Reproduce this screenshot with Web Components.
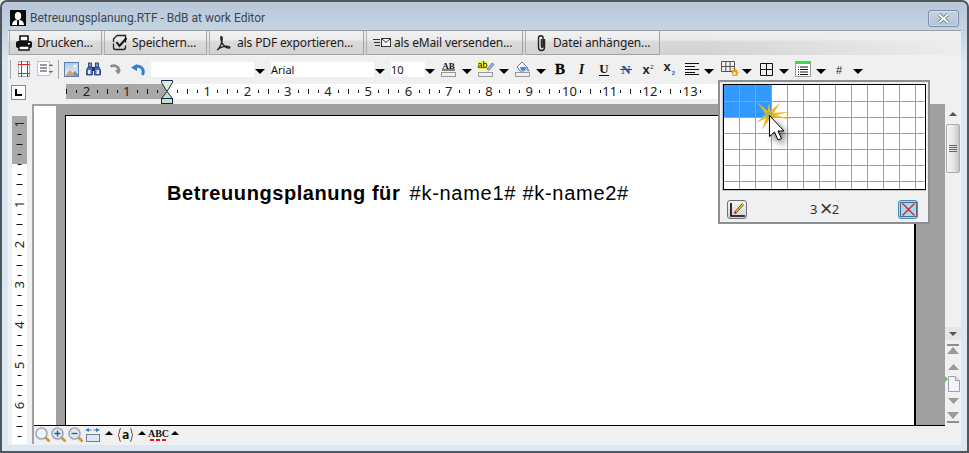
<!DOCTYPE html>
<html lang="de">
<head>
<meta charset="utf-8">
<title>BdB at work Editor</title>
<style>
    html, body { margin: 0; padding: 0; background: #dae8f4; }
</style>
</head>
<body>
<app-window>
    <title-bar slot="title" label="Betreuungsplanung.RTF - BdB at work Editor"></title-bar>
    <action-bar slot="actions">
        <action-button icon="print" style="--w:93px;--pl:5px;--gap:4px">Drucken...</action-button>
        <action-button icon="save" style="--w:103px;--pl:6px;--gap:4px">Speichern...</action-button>
        <action-button icon="pdf" style="--w:155px;--pl:6px;--gap:6px">als PDF exportieren...</action-button>
        <action-button icon="mail" style="--w:157px;--pl:6px;--gap:3px">als eMail versenden...</action-button>
        <action-button icon="clip" style="--w:135px;--pl:10px;--gap:6px">Datei anhängen...</action-button>
    </action-bar>
    <format-toolbar slot="toolbar"></format-toolbar>
    <h-ruler slot="ruler"></h-ruler>
    <v-ruler slot="vruler"></v-ruler>
    <doc-page slot="doc"><b>Betreuungsplanung für</b> #k-name1# #k-name2#</doc-page>
    <scroll-rail slot="scroll"></scroll-rail>
    <status-strip slot="status"></status-strip>
    <table-picker slot="popup"></table-picker>
</app-window>

<script>
const ICONS = {
    print: [18, 16, `<path d="M5 1h8v5H5z" fill="#fff" stroke="#111" stroke-width="1.6"/><rect x="1" y="6" width="16" height="7" rx="2" fill="#111"/><path d="M4 11h10v4H4z" fill="#fff" stroke="#111" stroke-width="1.4"/><rect x="13" y="8" width="2" height="1.5" fill="#fff"/>`],
    save: [17, 17, `<path d="M6 1.500h8.500v7M6 1.500 2.500 5v3M2.500 9.500V13.500q0 2 2 2h8q2 0 2-2v-2" fill="none" stroke="#222" stroke-width="1.300"/><path d="M5.500 8l3 4 7-8" fill="none" stroke="#111" stroke-width="2"/>`],
    pdf: [15, 16, `<path d="M1 15c2-1 4-5 5-9 .4-2 .3-4-.6-4.400-1-.2-.8 3 .6 6 1.500 3 4 5 6.500 5.500 1.500 .2 1.800-1 .6-1.500-2.500-.8-7-.3-12.100 3.400z" fill="none" stroke="#222" stroke-width="1.300"/>`],
    mail: [18, 12, `<path d="M0 2.500h7M1 5.500h6M2 8.500h5" stroke="#333" stroke-width="1"/><rect x="8.500" y="1.500" width="9" height="8" fill="#f4f4f4" stroke="#333"/><path d="M8.500 1.500l4.500 4 4.500-4" fill="none" stroke="#333"/>`],
    clip: [11, 18, `<path d="M8.500 5v8.500a3 3 0 0 1-6 0V4a2.300 2.300 0 0 1 4.600 0v8.500a.8 .8 0 0 1-1.600 0V5" fill="none" stroke="#222" stroke-width="1.400"/>`],
    margins: [12, 16, `<rect x=".5" y=".5" width="11" height="15" fill="#fff" stroke="#aab"/><path d="M3.500 0v16M9.500 0v16M0 3.500h12M0 12.500h12" stroke="#e02020" fill="none"/>`],
    layout: [17, 16, `<rect x=".5" y=".5" width="12" height="14" fill="#fff" stroke="#eda040" stroke-dasharray="2 1"/><path d="M3 4h7M3 7h7M3 10h7" stroke="#778" stroke-width="1.400"/><path d="M14 3l2.500 2h-5zM14 12l2.500-2h-5z" fill="#3c74b8"/>`],
    picture: [15, 15, `<defs><linearGradient id="sky" x1="0" y1="0" x2="0" y2="1"><stop offset="0" stop-color="#a8c8e8"/><stop offset="1" stop-color="#f0f4fa"/></linearGradient></defs><rect x=".5" y=".5" width="14" height="14" fill="url(#sky)" stroke="#5a7fa8"/><path d="M1 14l5-6 3 3 2-2 3 5z" fill="#d8a070"/><path d="M9 11l2-2 3 3v2h-4z" fill="#7a92b0"/><circle cx="11" cy="4" r="1.600" fill="#fff"/>`],
    binoculars: [15, 14, `<rect x="2.500" y="1" width="3" height="5" fill="#7d97d8" stroke="#1a2f70" stroke-width=".8"/><rect x="9.500" y="1" width="3" height="5" fill="#7d97d8" stroke="#1a2f70" stroke-width=".8"/><path d="M2 5h4.500v8H.5V8zM13 5H8.500v8h6V8z" fill="#4d6dbc" stroke="#1a2f70" stroke-width=".8"/><rect x="6.500" y="5" width="2" height="4" fill="#1a2f70"/><rect x="2" y="8" width="2.500" height="4" fill="#e4eeff"/><rect x="10.500" y="8" width="2.500" height="4" fill="#e4eeff"/>`],
    redo: [12, 12, `<path d="M9 10C11.500 5 7 1 1.500 3.500" fill="none" stroke="#868e90" stroke-width="2.800"/><path d="M6 7h6l-3 4.500z" fill="#868e90"/>`],
    undo: [14, 13, `<path d="M11.500 12C14 6 9 1.500 4 4" fill="none" stroke="#2f80d0" stroke-width="3"/><path d="M0 4.500 6 1v7z" fill="#2f80d0"/>`],
    fontcolor: [15, 16, `<text x="7.500" y="7.500" text-anchor="middle" font-family="Liberation Serif" font-weight="bold" font-size="9" fill="#111">AB</text><path d="M1 9h13" stroke="#111"/><rect x=".5" y="11.500" width="14" height="4" fill="#f0f0f0" stroke="#999"/>`],
    highlight: [16, 16, `<rect x="0" y="0" width="9" height="8" fill="#f3f03a"/><text x="4.500" y="7" text-anchor="middle" font-family="Liberation Sans" font-size="9" fill="#111">ab</text><path d="M9 8l5-6 2 1.500-5 6z" fill="#9db6d8" stroke="#4a6a98" stroke-width=".7"/><rect x=".5" y="11.500" width="14" height="4" fill="#f0f0f0" stroke="#999"/>`],
    bucket: [15, 16, `<path d="M2 6l5-5 6 6-4 3H5z" fill="#fff" stroke="#5a7fb8"/><path d="M5 6h7l-3 3.500H6z" fill="#4a88d8"/><path d="M12.500 7l2 3-2 .5z" fill="#3c70b8"/><rect x=".5" y="11.500" width="14" height="4" fill="#f0f0f0" stroke="#999"/>`],
    bold: [10, 12, `<text x="5" y="11" text-anchor="middle" font-family="Liberation Serif" font-weight="bold" font-size="15" fill="#000" stroke="#000" stroke-width=".3">B</text>`],
    italic: [9, 12, `<text x="4.500" y="11" text-anchor="middle" font-family="Liberation Serif" font-style="italic" font-weight="bold" font-size="14" fill="#111">I</text>`],
    underline: [10, 13, `<text x="5" y="10" text-anchor="middle" font-family="Liberation Serif" font-weight="bold" font-size="13" fill="#111">U</text><path d="M0 12.500h10" stroke="#111" stroke-width="1.200"/>`],
    strike: [12, 11, `<text x="6" y="10" text-anchor="middle" font-family="Liberation Serif" font-weight="bold" font-size="13" fill="#1c4ea0">N</text><path d="M0 5.500h12" stroke="#1c4ea0"/>`],
    sup: [12, 12, `<text x="4" y="11" text-anchor="middle" font-family="Liberation Sans" font-weight="bold" font-size="13" fill="#222">x</text><text x="10" y="6" text-anchor="middle" font-family="Liberation Sans" font-size="6" fill="#333">2</text>`],
    sub: [13, 13, `<text x="4" y="8" text-anchor="middle" font-family="Liberation Sans" font-weight="bold" font-size="13" fill="#222">x</text><text x="10.500" y="12" text-anchor="middle" font-family="Liberation Sans" font-size="6" font-weight="bold" fill="#2a60a8">2</text>`],
    align: [14, 12, `<path d="M0 .5h14M0 3.500h10M0 6.500h14M0 9.500h10M0 11.500h14" stroke="#111" fill="none"/>`],
    tableadd: [18, 16, `<path d="M.5 .5h13v10H.5zM4.800 .5v10M9.100 .5v10M.5 5.500h13" fill="none" stroke="#555"/><path d="M12.500 7l1 1.500 1.500-1 .3 1.800 1.900-.3-.8 1.800 1.500 1-1.500 1v2.200h-5v-2.200l-1.500-1 1.500-1-.8-1.800 1.900.3z" fill="#f29a20"/><rect x="12.500" y="11" width="2" height="3" fill="#fff2a0"/>`],
    table: [13, 13, `<path d="M.5 .5h12v12H.5zM6.500 .5v12M.5 6.500h12" fill="none" stroke="#111"/>`],
    list: [16, 16, `<rect x=".5" y=".5" width="15" height="15" fill="#fff" stroke="#999"/><rect x="1" y="1" width="14" height="2" fill="#36e040"/><path d="M5 6h8M5 8.500h8M5 11h8M5 13.500h8M3 6h1M3 8.500h1M3 11h1M3 13.500h1" stroke="#111"/>`],
    hash: [8, 11, `<text x="4" y="10" text-anchor="middle" font-family="Liberation Sans" font-size="11" fill="#222">#</text>`],
    zoom: [16, 16, `<circle cx="6.500" cy="6.500" r="5.500" fill="#eef5fb" stroke="#a0aab4" stroke-width="1.600"/><path d="M10.500 10.500l4 4" stroke="#c89a40" stroke-width="2.600"/>`],
    zoomin: [15, 16, `<circle cx="6.500" cy="6.500" r="5.500" fill="#dfeaf5" stroke="#a0aab4" stroke-width="1.600"/><path d="M10.500 10.500l4 4" stroke="#c89a40" stroke-width="2.600"/><path d="M6.500 3.500v6M3.500 6.500h6" stroke="#2f5f90" stroke-width="1.400"/>`],
    zoomout: [16, 16, `<circle cx="6.500" cy="6.500" r="5.500" fill="#dfeaf5" stroke="#a0aab4" stroke-width="1.600"/><path d="M10.500 10.500l4 4" stroke="#c89a40" stroke-width="2.600"/><path d="M3.500 6.500h6" stroke="#2f5f90" stroke-width="1.400"/>`],
    fit: [16, 14, `<path d="M0 2l4-2v1.500h2.500v1H4V4zM15 2l-4-2v1.500H8.500v1H11V4z" fill="#3a78c8"/><rect x="1.500" y="6.500" width="13" height="7" fill="#dbe8f6" stroke="#6f7f90"/>`],
    vars: [17, 14, `<path d="M4 .5C2 .5 3 5.500 1 7c2 1.500 1 6.500 3 6.500M13 .5c2 0 1 5 3 6.500-2 1.500-1 6.500-3 6.500" fill="none" stroke="#8a2020"/><text x="8.500" y="11" text-anchor="middle" font-family="DejaVu Sans Mono" font-weight="bold" font-size="12" fill="#111">a</text>`],
    spell: [17, 14, `<text x="8.500" y="9" text-anchor="middle" font-family="Liberation Serif" font-weight="bold" font-size="10" fill="#111">ABC</text><path d="M0 12h16" stroke="#f01010" stroke-width="2" stroke-dasharray="4 2"/>`]
};

function iconSvg(name) {
    const [w, h, body] = ICONS[name];
    return `<svg xmlns="http://www.w3.org/2000/svg" width="${w}" height="${h}" viewBox="0 0 ${w} ${h}" style="display:block;overflow:visible">${body}</svg>`;
}

class AppWindow extends HTMLElement {
    connectedCallback() {
        this.attachShadow({ mode: 'open' });
        this.shadowRoot.innerHTML = `
            <style>
                :host {
                    display: block;
                    position: relative;
                    width: 969px;
                    height: 453px;
                    box-sizing: border-box;
                    overflow: hidden;
                    border: 2px solid #50565c;
                    border-radius: 7px 7px 0 0;
                    background: linear-gradient(#b7c7d8 0, #c6d5e3 30px, #d9e7f3 60px, #dae8f4 100%);
                    font-family: "Noto Sans", sans-serif;
                }
                .frame {
                    display: flex;
                    flex-direction: column;
                    height: 100%;
                    padding: 6px;
                    box-sizing: border-box;
                }
                .client {
                    flex: 1;
                    display: flex;
                    flex-direction: column;
                    min-height: 0;
                }
                .main {
                    flex: 1;
                    display: flex;
                    min-height: 0;
                    background: #f0f0f0;
                }
                .left {
                    width: 24px;
                    flex: none;
                    padding: 12px 5px 1px 4px;
                    box-sizing: border-box;
                    display: flex;
                }
                .bar {
                    width: 2px;
                    flex: none;
                    background: #a0a0a0;
                    margin-bottom: 1px;
                }
                .center {
                    flex: 1;
                    min-width: 0;
                    display: flex;
                    flex-direction: column;
                }
                .docrow {
                    flex: 1;
                    min-height: 0;
                    display: flex;
                }
                .docarea {
                    flex: 1;
                    min-width: 0;
                    display: flex;
                    background: #a0a0a0;
                    padding-top: 2px;
                }
                .strip {
                    width: 22px;
                    background: #fff;
                    flex: none;
                }
                .sheet {
                    flex: 1;
                    min-width: 0;
                    padding: 9px 29px 0 9px;
                    display: flex;
                }
            </style>
            <div class="frame">
                <slot name="title"></slot>
                <div class="client">
                    <slot name="actions"></slot>
                    <slot name="toolbar"></slot>
                    <slot name="ruler"></slot>
                    <div class="main">
                        <div class="left"><slot name="vruler"></slot></div>
                        <div class="bar"></div>
                        <div class="center">
                            <div class="docrow">
                                <div class="docarea">
                                    <div class="strip"></div>
                                    <div class="sheet"><slot name="doc"></slot></div>
                                </div>
                                <slot name="scroll"></slot>
                            </div>
                            <slot name="status"></slot>
                        </div>
                    </div>
                </div>
            </div>
            <slot name="popup"></slot>
        `;
    }
}

class TitleBar extends HTMLElement {
    connectedCallback() {
        this.attachShadow({ mode: 'open' });
        this.shadowRoot.innerHTML = `
            <style>
                :host {
                    display: flex;
                    align-items: center;
                    height: 22px;
                    padding: 0 2px 2px 2px;
                    box-sizing: border-box;
                }
                .logo { margin-right: 4px; flex: none; }
                .label {
                    flex: 1;
                    font: 12px Roboto, sans-serif;
                    color: #3c4650;
                    white-space: nowrap;
                }
                .close {
                    width: 29px;
                    height: 15px;
                    border: 1px solid #7b8da3;
                    border-radius: 3px;
                    background: linear-gradient(#c4d2e0, #b2c3d4);
                    box-shadow: inset 0 0 0 1px rgba(255,255,255,.35);
                    display: flex;
                    align-items: center;
                    justify-content: center;
                }
            </style>
            <svg class="logo" width="16" height="16" viewBox="0 0 16 16">
                <rect width="16" height="16" fill="#0a0a0a"/>
                <ellipse cx="8" cy="6" rx="3.200" ry="4" fill="#fff"/>
                <path d="M2 15c0-3 2-4.500 4-5l2 1 2-1c2 .5 4 2 4 5z" fill="#fff"/>
                <path d="M7 11h2v4H7z" fill="#0a0a0a"/>
            </svg>
            <span class="label">${this.getAttribute('label')}</span>
            <span class="close">
                <svg width="13" height="11" viewBox="0 0 13 11">
                    <path d="M2 1.500l9 8M11 1.500l-9 8" stroke="#5f6e7c" stroke-width="3.600"/>
                    <path d="M2 1.500l9 8M11 1.500l-9 8" stroke="#f6f8fa" stroke-width="2"/>
                </svg>
            </span>
        `;
    }
}

class ActionBar extends HTMLElement {
    connectedCallback() {
        this.attachShadow({ mode: 'open' });
        this.shadowRoot.innerHTML = `
            <style>
                :host {
                    display: flex;
                    gap: 2px;
                    height: 25px;
                    padding-left: 1px;
                    box-sizing: border-box;
                    background:
                        linear-gradient(90deg, rgba(240,240,240,0) 700px, rgba(240,240,240,.9) 100%),
                        linear-gradient(#eeeeee 0, #eaeaea 9px, #d8d8d8 10px, #d2d2d2 100%);
                    border-top: 1px solid #9a9ea2;
                    box-shadow: inset -1px 0 0 #e8eef4;
                }
            </style>
            <slot></slot>
        `;
    }
}

class ActionButton extends HTMLElement {
    connectedCallback() {
        this.attachShadow({ mode: 'open' });
        this.shadowRoot.innerHTML = `
            <style>
                :host {
                    display: flex;
                    align-items: center;
                    flex: none;
                    box-sizing: border-box;
                    width: var(--w);
                    padding-left: var(--pl);
                    gap: var(--gap);
                    height: 24px;
                    border: 1px solid #a4a4a4;
                    border-top: 0;
                    border-left-color: #b0b0b0;
                    background: linear-gradient(#f2f2f2 0, #ebebeb 9px, #dcdcdc 10px, #d2d2d2 100%);
                    font: 12px "Noto Sans", sans-serif;
                    color: #1b1b1b;
                    white-space: nowrap;
                    letter-spacing: -.14px;
                }
            </style>
            ${iconSvg(this.getAttribute('icon'))}
            <slot></slot>
        `;
    }
}

class FormatToolbar extends HTMLElement {
    connectedCallback() {
        this.attachShadow({ mode: 'open' });
        // name, gap to the item before it
        const items = [
            ['sep', 2], ['margins', 7], ['layout', 7], ['sep', 4], ['picture', 5], ['binoculars', 7], ['redo', 8], ['undo', 10],
            ['box:', 6, 103], ['arrow', 1], ['box:Arial', 6, 103], ['arrow', 1], ['box:10', 6, 34], ['arrow', 0],
            ['fontcolor', 6], ['arrow', 6], ['highlight', 6], ['arrow', 5], ['bucket', 6], ['arrow', 6],
            ['bold', 9], ['italic', 12], ['underline', 13], ['strike', 11], ['sup', 10], ['sub', 9], ['align', 9], ['arrow', 5],
            ['tableadd', 7], ['arrow', 3], ['table', 8], ['arrow', 6], ['list', 6], ['arrow', 5], ['hash', 9], ['arrow', 10]
        ];
        const html = items.map(([name, gap, width]) => {
            const ml = `margin-left:${gap}px`;
            if (name === 'sep') return `<i class="sep" style="${ml}"></i>`;
            if (name === 'arrow') return `<i class="arrow" style="${ml}"></i>`;
            if (name.startsWith('box:')) return `<span class="box" style="${ml};width:${width}px">${name.slice(4)}</span>`;
            return `<span class="ico" style="${ml}">${iconSvg(name)}</span>`;
        }).join('');
        this.shadowRoot.innerHTML = `
            <style>
                :host {
                    display: flex;
                    align-items: center;
                    height: 29px;
                    background: #f0f0f0;
                    box-sizing: border-box;
                    padding-bottom: 1px;
                }
                .sep { width: 1px; height: 19px; background: #a8a8a8; flex: none; }
                .ico { flex: none; display: block; }
                .arrow {
                    flex: none;
                    width: 0;
                    height: 0;
                    border-left: 5px solid transparent;
                    border-right: 5px solid transparent;
                    border-top: 5px solid #000;
                    margin-top: 4px;
                }
                .box {
                    flex: none;
                    height: 15px;
                    box-sizing: border-box;
                    background: #fff;
                    font: 11px/15px "Noto Sans", sans-serif;
                    color: #111;
                }
            </style>
            ${html}
        `;
    }
}

class HRuler extends HTMLElement {
    connectedCallback() {
        this.attachShadow({ mode: 'open' });
        let marks = '';
        const zero = 101;
        const unit = 40.25;
        for (let q = -10; q <= 53; q++) {
            const x = zero + q * unit / 4;
            if (q === 0) continue;
            if (q % 4 === 0) {
                marks += `<text x="${x}" y="12" text-anchor="middle">${Math.abs(q / 4)}</text>`;
            } else {
                const h = Math.abs(q % 4) === 2 ? 5 : 3;
                marks += `<rect x="${Math.round(x)}" y="${7.500 - h / 2}" width="1" height="${h}" fill="#111"/>`;
            }
        }
        this.shadowRoot.innerHTML = `
            <style>
                :host {
                    display: flex;
                    position: relative;
                    height: 20px;
                    background: #f0f0f0;
                    box-sizing: border-box;
                }
                .corner {
                    width: 15px;
                    height: 15px;
                    margin: 1px 0 0 3px;
                    box-sizing: border-box;
                    border: 1px solid #8a8a8a;
                    background: #fff;
                    flex: none;
                    display: flex;
                    align-items: center;
                    justify-content: center;
                }
                .corner i {
                    width: 7px;
                    height: 7px;
                    border-left: 2px solid #000;
                    border-bottom: 2px solid #000;
                    box-sizing: border-box;
                    display: block;
                }
                svg.scale {
                    display: block;
                    margin-left: 40px;
                    flex: none;
                    overflow: visible;
                    font: 13px "Noto Sans", sans-serif;
                    fill: #222;
                }
                svg.glass {
                    position: absolute;
                    left: 153px;
                    top: -4px;
                }
            </style>
            <div class="corner"><i></i></div>
            <svg class="scale" width="848" height="15" viewBox="0 0 848 15">
                <rect width="848" height="15" fill="#fff"/>
                <rect width="100" height="15" fill="#a8a8a8"/>
                ${marks}
            </svg>
            <svg class="glass" width="12" height="24" viewBox="0 0 12 24">
                <path d="M.5 .5h11v2L6 11.500 .5 2.500z" fill="#dcecdc" stroke="#16264a"/>
                <path d="M6 11.500l5.500 7H.5z" fill="#c5e0c5" stroke="#16264a"/>
                <rect x=".5" y="18.500" width="11" height="5" fill="#c5e0c5" stroke="#16264a"/>
            </svg>
        `;
    }
}

class VRuler extends HTMLElement {
    connectedCallback() {
        this.attachShadow({ mode: 'open' });
        let marks = '';
        const zero = 48;
        const unit = 40.25;
        for (let q = -4; q <= 27; q++) {
            const y = zero + q * unit / 4;
            if (q % 4 === 0 && q !== 0) {
                marks += `<text x="0" y="0" transform="translate(12 ${y}) rotate(-90)" text-anchor="middle">${Math.abs(q / 4)}</text>`;
            } else {
                const w = Math.abs(q % 4) === 2 ? 6 : 4;
                marks += `<rect x="${7.500 - w / 2}" y="${Math.round(y)}" width="${w}" height="1" fill="#111"/>`;
            }
        }
        this.shadowRoot.innerHTML = `
            <style>
                :host { display: block; width: 15px; height: 100%; }
                svg { display: block; overflow: visible; font: 13px "Noto Sans", sans-serif; fill: #222; }
            </style>
            <svg width="15" height="328" viewBox="0 0 15 328">
                <rect width="15" height="328" fill="#fff"/>
                <rect width="15" height="48" fill="#a8a8a8"/>
                ${marks}
            </svg>
        `;
    }
}

class DocPage extends HTMLElement {
    connectedCallback() {
        this.attachShadow({ mode: 'open' });
        this.shadowRoot.innerHTML = `
            <style>
                :host {
                    display: block;
                    flex: 1;
                    box-sizing: border-box;
                    background: #fff;
                    border-top: 1px solid #000;
                    border-left: 1px solid #000;
                    border-right: 2px solid #000;
                    padding: 65px 0 0 101px;
                    font: 20px/24px "Liberation Sans", Arial, sans-serif;
                    letter-spacing: .72px;
                    color: #000;
                    white-space: nowrap;
                }
                ::slotted(b) {
                    letter-spacing: .58px;
                    margin-right: 3px;
                }
            </style>
            <slot></slot>
        `;
    }
}

class ScrollRail extends HTMLElement {
    connectedCallback() {
        this.attachShadow({ mode: 'open' });
        const tri = (w, h, up, fill) => `<svg width="${w}" height="${h}" viewBox="0 0 ${w} ${h}" style="display:block"><path d="${up ? `M0 ${h}L${w / 2} 0L${w} ${h}z` : `M0 0H${w}L${w / 2} ${h}z`}" fill="${fill}"/></svg>`;
        const edge = (up) => `<svg width="12" height="11" viewBox="0 0 12 11" style="display:block">${up
            ? '<rect width="12" height="2" fill="#8e8e8e"/><path d="M0 10l6-7 6 7z" fill="#9a9a9a"/>'
            : '<path d="M0 0h12l-6 7z" fill="#9a9a9a"/><rect y="9" width="12" height="2" fill="#8e8e8e"/>'}</svg>`;
        this.shadowRoot.innerHTML = `
            <style>
                :host {
                    display: flex;
                    flex-direction: column;
                    align-items: center;
                    position: relative;
                    width: 16px;
                    flex: none;
                    background: #f0f0f0;
                }
                .end {
                    width: 100%;
                    height: 20px;
                    flex: none;
                    display: flex;
                    align-items: center;
                    justify-content: center;
                }
                .thumb {
                    width: 14px;
                    height: 49px;
                    flex: none;
                    box-sizing: border-box;
                    border: 1px solid #a8aeb4;
                    border-radius: 2px;
                    background: linear-gradient(90deg, #f4f4f4, #e4e4e4 55%, #c4c4c4);
                    display: flex;
                    flex-direction: column;
                    align-items: center;
                    justify-content: center;
                    gap: 1px;
                }
                .thumb i { width: 8px; height: 1px; background: #666; display: block; }
                .track { flex: 1; }
                .down { height: 13px; background: #e6e6e6; }
                .nav { display: flex; justify-content: center; flex: none; }
                .marker {
                    position: absolute;
                    left: 0;
                    top: 272px;
                    width: 0;
                    height: 0;
                    border-left: 3px solid #20f020;
                    border-top: 3.500px solid transparent;
                    border-bottom: 3.500px solid transparent;
                }
            </style>
            <div class="end">${tri(8, 4, true, '#555')}</div>
            <div class="thumb"><i></i><i></i><i></i><i></i></div>
            <div class="track"></div>
            <div class="end down">${tri(8, 4, false, '#555')}</div>
            <div class="nav" style="margin-top:4px">${edge(true)}</div>
            <div class="nav" style="margin-top:9px">${tri(11, 6, true, '#9a9a9a')}</div>
            <div class="nav" style="margin-top:6px">
                <svg width="13" height="16" viewBox="0 0 13 16" style="display:block">
                    <path d="M1.500 .5h7l4 4v11h-11z" fill="#f4f5fa" stroke="#9a9fb8"/>
                    <path d="M8.500 .5v4h4" fill="#dfe2ee" stroke="#9a9fb8"/>
                </svg>
            </div>
            <div class="nav" style="margin-top:6px">${tri(11, 6, false, '#9a9a9a')}</div>
            <div class="nav" style="margin:8px 0 2px">${edge(false)}</div>
            <i class="marker"></i>
        `;
    }
}

class StatusStrip extends HTMLElement {
    connectedCallback() {
        this.attachShadow({ mode: 'open' });
        const up = '<i class="up"></i>';
        this.shadowRoot.innerHTML = `
            <style>
                :host {
                    display: flex;
                    align-items: center;
                    height: 20px;
                    flex: none;
                    box-sizing: border-box;
                    background: #f0f0f0;
                    position: relative;
                    padding-left: 1px;
                }
                :host::before {
                    content: "";
                    position: absolute;
                    left: 0;
                    right: 16px;
                    top: 0;
                    height: 1px;
                    background: #000;
                }
                svg { flex: none; }
                .up {
                    width: 0;
                    height: 0;
                    border-left: 4px solid transparent;
                    border-right: 4px solid transparent;
                    border-bottom: 4px solid #000;
                    flex: none;
                    margin: 0 4px 4px 4px;
                }
            </style>
            ${iconSvg('zoom')}
            ${iconSvg('zoomin')}
            <span style="width:2px"></span>
            ${iconSvg('zoomout')}
            <span style="width:1px"></span>
            ${iconSvg('fit')}
            ${up}
            ${iconSvg('vars')}
            ${up}
            ${iconSvg('spell')}
            ${up}
        `;
    }
}

class TablePicker extends HTMLElement {
    connectedCallback() {
        this.attachShadow({ mode: 'open' });
        let cells = '';
        for (let r = 0; r < 7; r++) {
            for (let c = 0; c < 13; c++) {
                cells += `<i class="${r < 2 && c < 3 ? 'on' : ''}"></i>`;
            }
        }
        this.shadowRoot.innerHTML = `
            <style>
                :host {
                    display: block;
                    position: absolute;
                    left: 716px;
                    top: 78px;
                    width: 212px;
                    height: 144px;
                    box-sizing: border-box;
                    background: #f0f0f0;
                    border: 2px solid #8c9094;
                    padding: 2px 2px 0 2px;
                }
                .frame {
                    border: 1px solid #c4c4c4;
                    border-top: 0;
                }
                .grid {
                    display: grid;
                    grid-template-columns: repeat(12, 15px) 9px;
                    grid-template-rows: 16px repeat(5, 15px) 7px;
                    gap: 1px;
                    background: #a0a0a0;
                    border: 1px solid #000;
                    width: max-content;
                }
                .grid i { background: #fff; display: block; }
                .grid i.on { background: #3399ff; }
                .foot {
                    display: flex;
                    align-items: center;
                    justify-content: space-between;
                    padding: 8px 8px 0 5px;
                }
                .btn {
                    width: 20px;
                    height: 19px;
                    box-sizing: border-box;
                    border-radius: 3px;
                    display: flex;
                    align-items: center;
                    justify-content: center;
                }
                .draw { border: 1px solid #707070; background: linear-gradient(#f4f4f4, #d4d4d4); }
                .cancel { border: 1px solid #3f8ecb; background: #9edbf5; }
                .size {
                    font: 13px/19px "Noto Sans", sans-serif;
                    color: #333;
                    white-space: nowrap;
                    margin-left: 4px;
                }
                .size span {
                    font: 22px/19px "Liberation Sans", sans-serif;
                    vertical-align: -2px;
                    margin: 0 -1px 0 -1px;
                }
                .fx {
                    position: absolute;
                    left: 28px;
                    top: 9px;
                    pointer-events: none;
                }
            </style>
            <div class="frame"><div class="grid">${cells}</div></div>
            <div class="foot">
                <span class="btn draw">
                    <svg width="17" height="15" viewBox="0 0 17 15">
                        <path d="M2 1v13h14" fill="none" stroke="#000" stroke-width="1.600"/>
                        <path d="M6 11l8-9" stroke="#222" stroke-width="2.400"/>
                        <path d="M6 11l8-9" stroke="#f0d020" stroke-width="1.200"/>
                        <path d="M5.500 11.500l1.500-1.500" stroke="#e02020" stroke-width="2"/>
                    </svg>
                </span>
                <span class="size">3 <span>×</span>2</span>
                <span class="btn cancel">
                    <svg width="17" height="15" viewBox="0 0 17 15">
                        <rect x=".5" y=".5" width="16" height="14" fill="none" stroke="#000" stroke-dasharray="1 1"/>
                        <path d="M2.500 1.500l12 12M14.500 1.500l-12 12" stroke="#f01818" stroke-width="1.400"/>
                    </svg>
                </span>
            </div>
            <svg class="fx" width="70" height="70" viewBox="0 0 70 70">
                <defs>
                    <filter id="soft" x="-60%" y="-60%" width="220%" height="220%"><feGaussianBlur stdDeviation="3.500"/></filter>
                </defs>
                <g fill="#eeb822" transform="translate(21 24)">
                    <path d="M-2 -2L22 4 -1 2z"/>
                    <path d="M-1 -2L21 -3 -1 2z"/>
                    <path d="M-2 -1L11 -12 2 2z"/>
                    <path d="M-2 0L0 -12 2 0z"/>
                    <path d="M-2 1L-12 -13 2 -1z"/>
                    <path d="M-2 -2L-13 8 2 1z"/>
                    <path d="M-2 0L-7 15 2 2z"/>
                </g>
                <ellipse cx="21" cy="24" rx="3.500" ry="3.500" fill="#9ab060" opacity=".8"/>
                <path d="M21 24v21l5-4 4 8 3-1.500-3.500-7.500h6.500z" transform="translate(4 5)" fill="#000" opacity=".6" filter="url(#soft)"/>
                <path d="M21.500 24.500v21l5-4.500 3.500 8 3.500-1.500-3.500-7.500h6z" fill="#fff" stroke="#000" stroke-width="1"/>
            </svg>
        `;
    }
}

customElements.define('app-window', AppWindow);
customElements.define('title-bar', TitleBar);
customElements.define('action-bar', ActionBar);
customElements.define('action-button', ActionButton);
customElements.define('format-toolbar', FormatToolbar);
customElements.define('h-ruler', HRuler);
customElements.define('v-ruler', VRuler);
customElements.define('doc-page', DocPage);
customElements.define('scroll-rail', ScrollRail);
customElements.define('status-strip', StatusStrip);
customElements.define('table-picker', TablePicker);
</script>
</body>
</html>
